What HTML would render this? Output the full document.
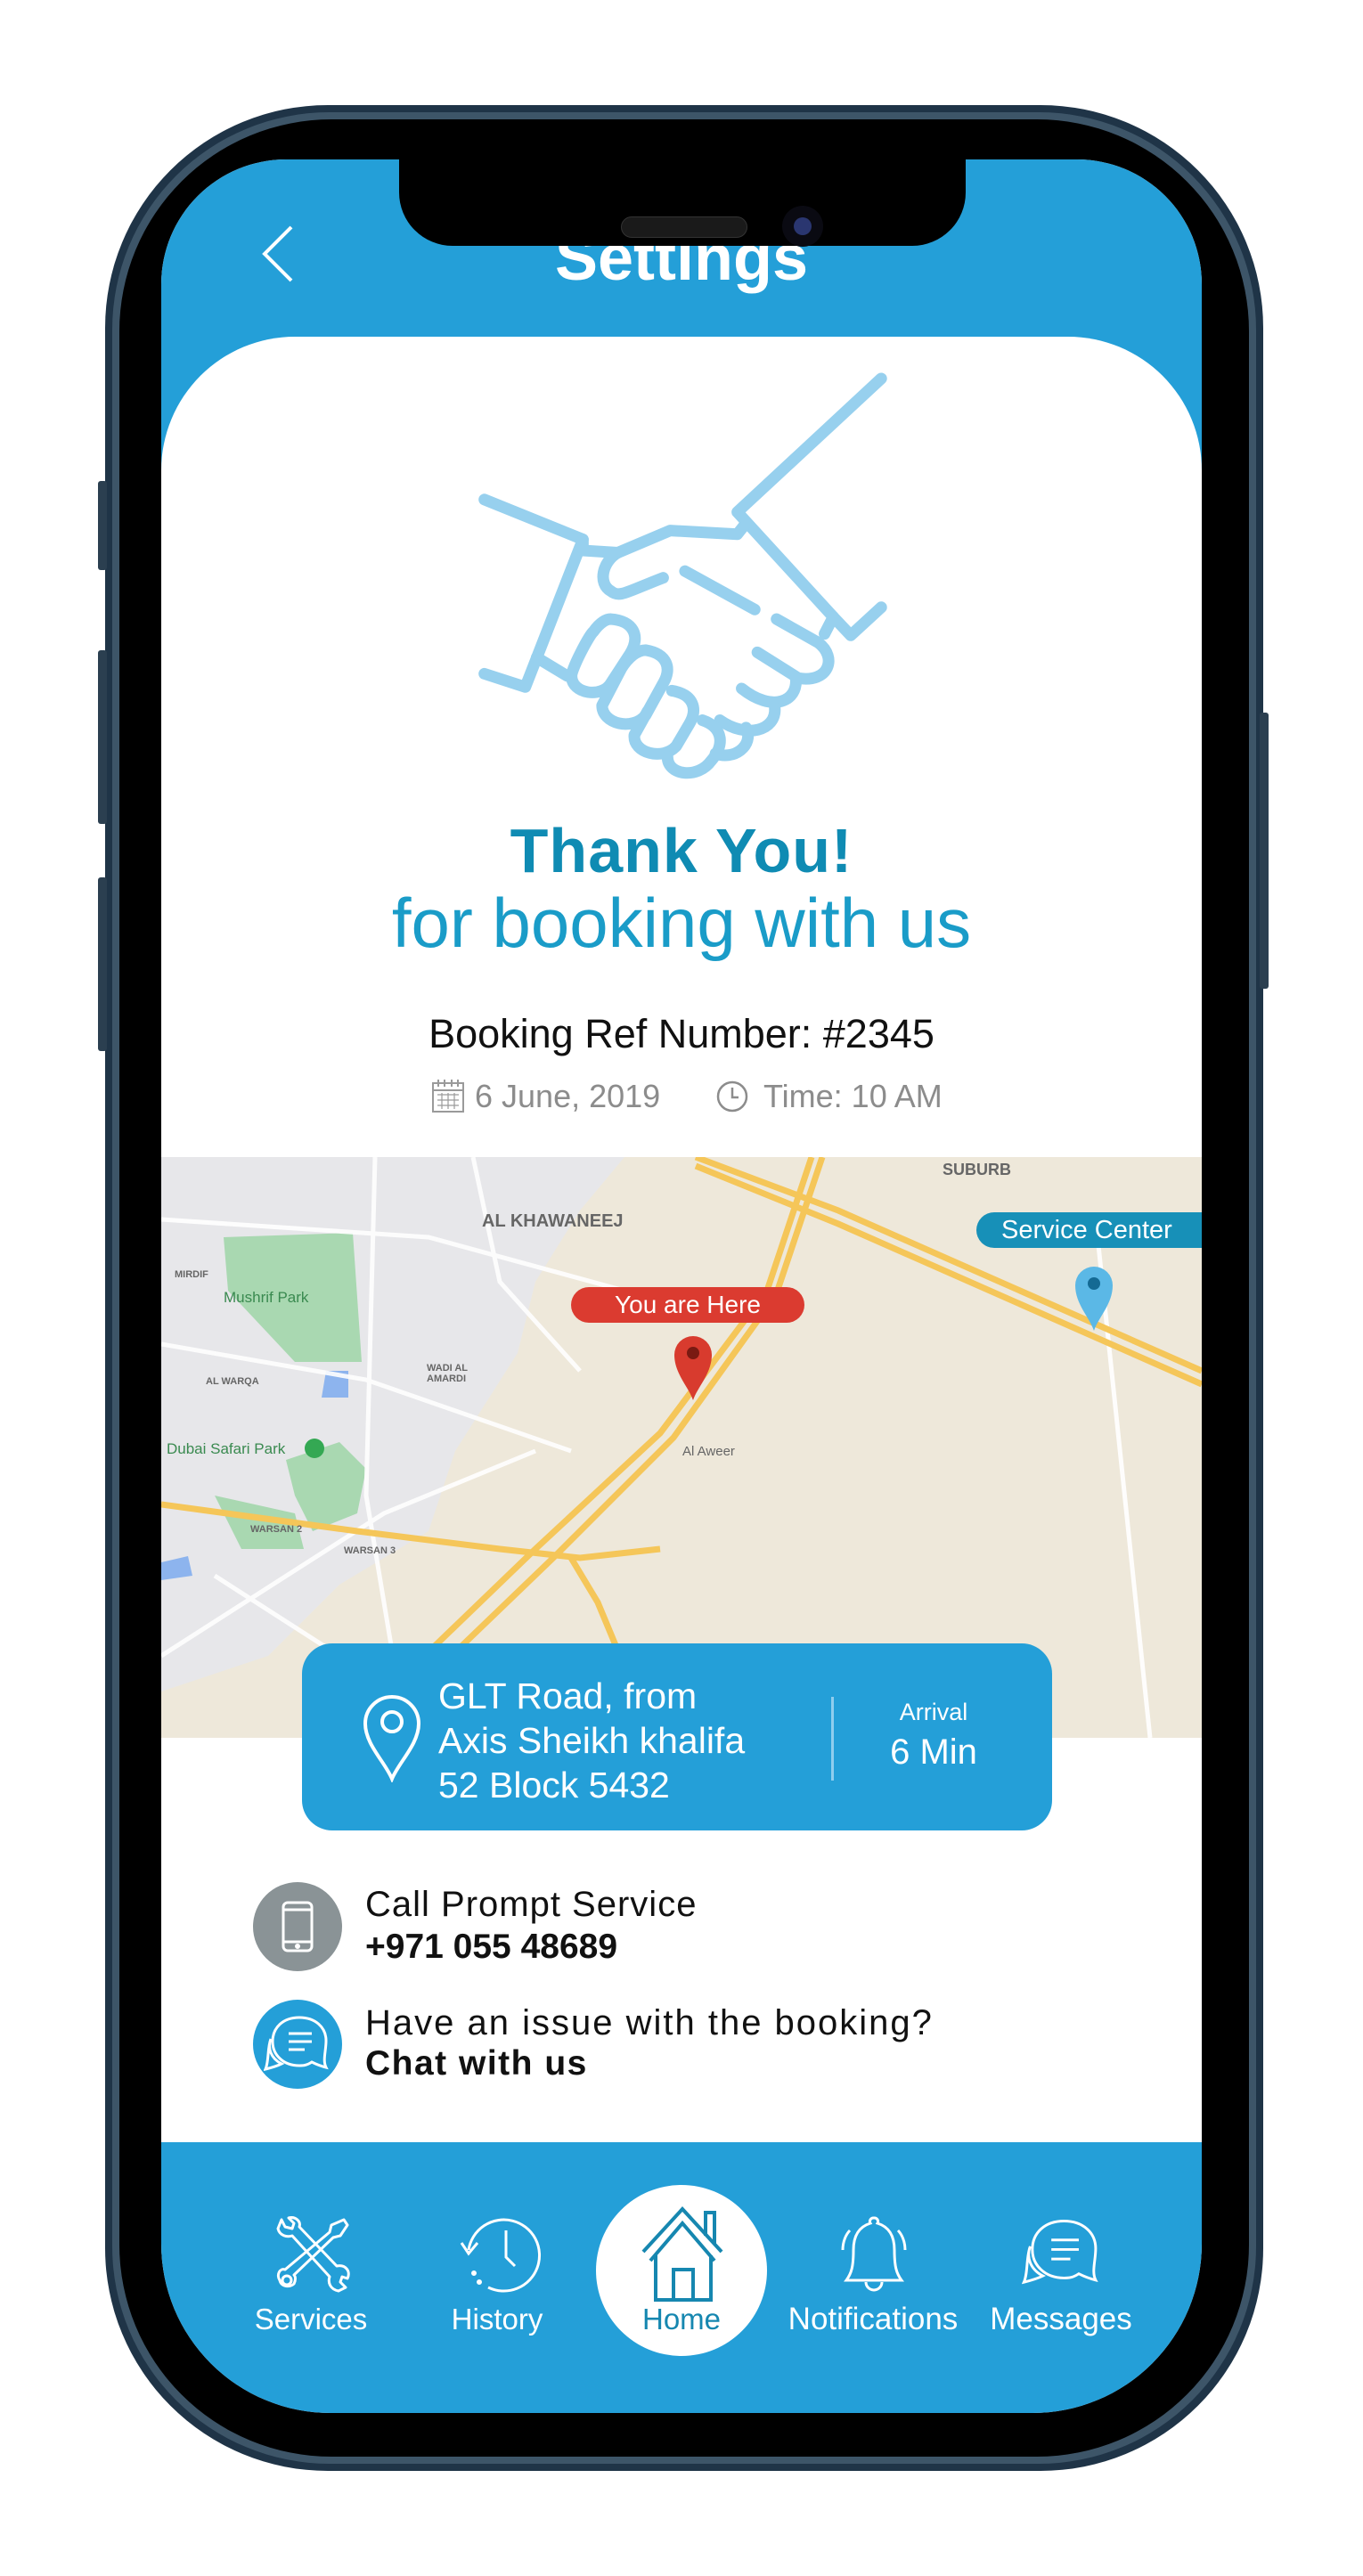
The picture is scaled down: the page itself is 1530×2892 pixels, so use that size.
<!DOCTYPE html>
<html><head><meta charset="utf-8">
<style>
*{margin:0;padding:0;box-sizing:border-box}
html,body{width:1530px;height:2892px;background:#fff;overflow:hidden;font-family:"Liberation Sans",sans-serif}
.abs{position:absolute}
.t{position:absolute;white-space:nowrap}
</style></head><body>
<!-- phone frame -->
<div class="abs" style="left:118px;top:118px;width:1300px;height:2656px;border-radius:250px;background:#1f3447;"></div>
<div class="abs" style="left:126px;top:126px;width:1284px;height:2640px;border-radius:244px;background:#3d5568;"></div>
<div class="abs" style="left:134px;top:134px;width:1268px;height:2624px;border-radius:238px;background:#000;"></div>
<!-- side buttons -->
<div class="abs" style="left:110px;top:540px;width:10px;height:100px;background:#2b3f50;border-radius:3px"></div>
<div class="abs" style="left:110px;top:730px;width:10px;height:195px;background:#2b3f50;border-radius:3px"></div>
<div class="abs" style="left:110px;top:985px;width:10px;height:195px;background:#2b3f50;border-radius:3px"></div>
<div class="abs" style="left:1414px;top:800px;width:10px;height:310px;background:#2b3f50;border-radius:3px"></div>

<!-- screen -->
<div class="abs" style="left:181px;top:179px;width:1168px;height:2530px;border-radius:140px 140px 190px 190px;overflow:hidden;background:#fff">
  <div class="abs" style="left:0;top:0;width:1168px;height:420px;background:#249fd8"></div>
  <div class="abs" style="left:0;top:199px;width:1168px;height:2100px;background:#fff;border-radius:150px 150px 0 0"></div>
  <!-- back -->
  <svg class="abs" style="left:110px;top:74px" width="40" height="64"><path d="M36 2 L6 32 L36 62" fill="none" stroke="#fff" stroke-width="4"/></svg>
  <div class="t" style="left:0;width:1168px;text-align:center;top:70px;font-size:72px;font-weight:bold;color:#fff">Settings</div>

  <!-- handshake (coords in zoom units) -->
  <svg class="abs" style="left:348px;top:236px" width="470" height="464" viewBox="540 500 480 560" preserveAspectRatio="none" fill="none" stroke="#97d0ee" stroke-width="13" stroke-linecap="round" stroke-linejoin="round">
   <g vector-effect="non-scaling-stroke">
    <path vector-effect="non-scaling-stroke" d="M1010 512 L845 693 L955 835 L945 858"/>
    <path vector-effect="non-scaling-stroke" d="M1010 822 L975 860 L955 835"/>
    <path vector-effect="non-scaling-stroke" d="M555 676 L668 730 L602 930 L555 912"/>
    <path vector-effect="non-scaling-stroke" d="M668 730 L668 745 L708 748 L768 718 L845 723 L855 708"/>
    <path vector-effect="non-scaling-stroke" d="M708 748 C690 760 685 790 700 800 C710 810 720 800 760 782"/>
    <path vector-effect="non-scaling-stroke" d="M785 773 L865 825"/>
    <path vector-effect="non-scaling-stroke" d="M890 838 L938 870 C960 890 950 925 915 918 L868 883"/>
    <path vector-effect="non-scaling-stroke" d="M912 918 C915 950 885 965 850 932"/>
    <path vector-effect="non-scaling-stroke" d="M888 958 C890 990 855 1000 825 975"/>
    <path vector-effect="non-scaling-stroke" d="M615 890 L650 915"/>
    <path vector-effect="non-scaling-stroke" d="M700 838 C725 840 735 860 722 885 L700 925 C690 945 655 940 655 915 C655 905 675 860 680 855 C688 842 695 838 700 838Z" />
    <path vector-effect="non-scaling-stroke" d="M740 880 C765 885 770 905 760 925 L740 968 C725 990 690 980 690 955 L712 905 C720 890 730 880 740 880Z"/>
    <path vector-effect="non-scaling-stroke" d="M770 935 C795 940 800 960 790 980 L775 1010 C760 1030 725 1020 727 995 L742 963"/>
    <path vector-effect="non-scaling-stroke" d="M805 975 C830 985 830 1010 815 1030 C800 1055 765 1050 765 1025"/>
    <path vector-effect="non-scaling-stroke" d="M820 1020 C840 1030 865 1010 855 985"/>
   </g>
  </svg>

  <div class="t" style="left:0;width:1168px;text-align:center;top:736px;font-size:70px;font-weight:bold;color:#0f8bb3;letter-spacing:1px">Thank You!</div>
  <div class="t" style="left:0;width:1168px;text-align:center;top:812px;font-size:78px;color:#1a9cc8">for booking with us</div>
  <div class="t" style="left:0;width:1168px;text-align:center;top:956px;font-size:45px;color:#111">Booking Ref Number: #2345</div>
  <!-- date row -->
  <svg class="abs" style="left:303px;top:1031px" width="38" height="40" viewBox="0 0 38 40" fill="none" stroke="#9a9a9a" stroke-width="2"><rect x="2" y="6" width="34" height="32"/><line x1="2" y1="14" x2="36" y2="14"/><path d="M8 2v8M15 2v8M23 2v8M30 2v8"/><path d="M7 19h24M7 25h24M7 31h24M12 17v18M19 17v18M26 17v18" stroke-width="1.2"/></svg>
  <div class="t" style="left:352px;top:1031px;font-size:36px;color:#8c8c8c">6 June, 2019</div>
  <svg class="abs" style="left:622px;top:1033px" width="38" height="38" fill="none" stroke="#8c8c8c" stroke-width="2.5"><circle cx="19" cy="19" r="16"/><path d="M19 9v11h7"/></svg>
  <div class="t" style="left:676px;top:1031px;font-size:36px;color:#8c8c8c">Time: 10 AM</div>

  <!-- map -->
  <svg class="abs" style="left:0;top:1120px" width="1168" height="652" viewBox="0 0 1168 652">
    <rect width="1168" height="652" fill="#eee8da"/>
    <path d="M0 0 H520 L470 60 L420 140 L400 220 L330 330 L300 420 L200 480 L120 560 L0 600Z" fill="#e7e7ea"/>
    <path d="M70 90 L215 85 L225 230 L150 230 L75 150Z" fill="#a9d8b1"/>
    <path d="M185 240 L210 240 L210 270 L180 270Z" fill="#8db4ee"/>
    <path d="M140 340 L200 320 L230 350 L220 400 L170 420 L150 380Z" fill="#a9d8b1"/>
    <path d="M60 380 L150 400 L160 440 L90 440Z" fill="#a9d8b1"/>
    <path d="M0 455 L30 448 L35 470 L0 475Z" fill="#8db4ee"/>
    <g fill="none" stroke="#fff" stroke-width="5" opacity=".9">
      <path d="M0 70 L300 90 L520 150"/><path d="M240 0 L230 380 L260 560"/><path d="M0 210 L230 250 L460 330"/>
      <path d="M0 560 L250 400 L420 330"/><path d="M1050 80 L1110 652"/><path d="M350 0 L380 140 L470 240"/>
      <path d="M60 470 L200 560 L260 652"/>
    </g>
    <g fill="none" stroke="#f5c659" stroke-width="7">
      <path d="M200 652 L420 440 L560 310 L680 150 L730 0"/>
      <path d="M230 652 L440 450 L575 315 L690 155 L742 0"/>
      <path d="M600 0 L760 60 L1168 240"/>
      <path d="M600 10 L760 75 L1168 255"/>
      <path d="M0 390 L220 420 L380 440 L470 450 L560 440"/>
      <path d="M460 450 L490 500 L515 560 L520 652"/>
    </g>
    <g font-family="Liberation Sans" font-size="16" fill="#666" font-weight="bold">
      <text x="360" y="78" font-size="20">AL KHAWANEEJ</text>
      <text x="877" y="20" font-size="18">SUBURB</text>
      <text x="15" y="135" font-size="11">MIRDIF</text>
      <text x="50" y="255" font-size="11">AL WARQA</text>
      <text x="298" y="240" font-size="11">WADI AL</text>
      <text x="298" y="252" font-size="11">AMARDI</text>
      <text x="100" y="421" font-size="11">WARSAN 2</text>
      <text x="205" y="445" font-size="11">WARSAN 3</text>
      <text x="585" y="335" font-size="15" font-weight="normal">Al Aweer</text>
      <text x="70" y="163" font-size="17" font-weight="normal" fill="#3a8a50">Mushrif Park</text>
      <text x="6" y="333" font-size="17" font-weight="normal" fill="#3a8a50">Dubai Safari Park</text>
    </g>
    <circle cx="172" cy="327" r="11" fill="#34a853"/>
  </svg>
  <!-- you are here -->
  <div class="t" style="left:460px;top:1266px;width:262px;height:40px;background:#db3b30;border-radius:20px;color:#fff;font-size:28px;text-align:center;line-height:40px">You are Here</div>
  <svg class="abs" style="left:574px;top:1318px" width="46" height="76" viewBox="0 0 46 76"><path d="M23 75 C18 60 2 45 2 24 A21 21 0 0 1 44 24 C44 45 28 60 23 75Z" fill="#d83b2e"/><circle cx="23" cy="22" r="7" fill="#7a1a12"/></svg>
  <!-- service center -->
  <div class="t" style="left:915px;top:1182px;width:270px;height:40px;background:#1790b8;border-radius:20px 0 0 20px;color:#fff;font-size:29px;line-height:40px;padding-left:28px">Service Center</div>
  <svg class="abs" style="left:1024px;top:1240px" width="46" height="76" viewBox="0 0 46 76"><path d="M23 75 C18 60 2 45 2 24 A21 21 0 0 1 44 24 C44 45 28 60 23 75Z" fill="#5bb8e6"/><circle cx="23" cy="22" r="7" fill="#146a94"/></svg>

  <!-- address card -->
  <div class="abs" style="left:158px;top:1666px;width:842px;height:210px;background:#249fd8;border-radius:34px"></div>
  <svg class="abs" style="left:226px;top:1724px" width="66" height="98" viewBox="0 0 66 98" fill="none" stroke="#fff" stroke-width="4"><path d="M33 94 C25 75 3 55 3 32 A30 30 0 0 1 63 32 C63 55 41 75 33 94Z"/><circle cx="33" cy="30" r="11"/></svg>
  <div class="t" style="left:311px;top:1700px;font-size:41px;color:#fff;line-height:50px">GLT Road, from<br>Axis Sheikh khalifa<br>52 Block 5432</div>
  <div class="abs" style="left:752px;top:1726px;width:3px;height:94px;background:#8fcdee"></div>
  <div class="t" style="left:767px;width:200px;text-align:center;top:1728px;font-size:27px;color:#fff">Arrival</div>
  <div class="t" style="left:767px;width:200px;text-align:center;top:1766px;font-size:40px;color:#fff">6 Min</div>

  <!-- call -->
  <div class="abs" style="left:103px;top:1934px;width:100px;height:100px;border-radius:50%;background:#8a9396"></div>
  <svg class="abs" style="left:135px;top:1955px" width="36" height="58" fill="none" stroke="#fff" stroke-width="3"><rect x="2" y="2" width="32" height="54" rx="5"/><line x1="2" y1="10" x2="34" y2="10"/><line x1="2" y1="46" x2="34" y2="46"/><circle cx="18" cy="51" r="1.5" fill="#fff"/></svg>
  <div class="t" style="left:229px;top:1937px;font-size:40px;color:#111;letter-spacing:1px">Call Prompt Service</div>
  <div class="t" style="left:229px;top:1985px;font-size:39px;color:#111;font-weight:bold">+971 055 48689</div>
  <!-- chat -->
  <div class="abs" style="left:103px;top:2066px;width:100px;height:100px;border-radius:50%;background:#249fd8"></div>
  <svg class="abs" style="left:115px;top:2080px" width="76" height="72" viewBox="0 0 76 72" fill="none" stroke="#fff" stroke-width="3"><path d="M20 58 C8 52 4 40 8 30 C4 40 6 55 2 64 C10 62 16 60 20 58Z"/><path d="M40 6 C58 6 70 17 70 32 C70 44 66 54 70 62 C62 60 58 58 54 56 C48 60 44 60 40 60 C22 60 10 48 10 33 C10 17 22 6 40 6Z"/><path d="M28 24h26M28 33h26M28 42h18"/></svg>
  <div class="t" style="left:229px;top:2070px;font-size:40px;color:#111;letter-spacing:2px">Have an issue with the booking?</div>
  <div class="t" style="left:229px;top:2116px;font-size:39px;color:#111;font-weight:bold;letter-spacing:1.5px">Chat with us</div>

  <!-- bottom nav -->
  <div class="abs" style="left:0;top:2226px;width:1168px;height:304px;background:#249fd8"></div>
  <div class="abs" style="left:488px;top:2274px;width:192px;height:192px;border-radius:50%;background:#fff"></div>
  <!-- services -->
  <svg class="abs" style="left:127px;top:2309px" width="86" height="86" viewBox="0 0 86 86" fill="none" stroke="#fff" stroke-width="3" stroke-linejoin="round"><path d="M8 4 L4 14 C6 22 14 24 20 22 L62 68 C60 74 62 82 72 84 L80 80 L74 74 L76 68 L82 70 C86 62 80 54 70 56 L28 12 C30 6 24 0 16 2 L22 8 L20 14 L12 12Z"/><path d="M78 4 L64 10 L62 18 L12 60 C6 58 2 66 6 72 C8 80 18 80 22 76 C24 72 24 68 22 66 L66 24 L74 22 L82 10Z"/><circle cx="14" cy="72" r="5"/></svg>
  <div class="t" style="left:88px;width:160px;text-align:center;top:2406px;font-size:33px;color:#fff">Services</div>
  <!-- history -->
  <svg class="abs" style="left:333px;top:2307px" width="100" height="92" viewBox="0 0 100 92" fill="none" stroke="#fff" stroke-width="3"><path d="M12 40 A40 40 0 1 1 34 82"/><path d="M4 32 L12 44 L22 32"/><path d="M54 18 V48 L64 58"/><circle cx="18" cy="66" r="1.5" fill="#fff"/><circle cx="24" cy="76" r="1.5" fill="#fff"/></svg>
  <div class="t" style="left:297px;width:160px;text-align:center;top:2406px;font-size:33px;color:#fff">History</div>
  <!-- home -->
  <svg class="abs" style="left:537px;top:2297px" width="96" height="110" viewBox="0 0 96 110" fill="none" stroke="#1687b0" stroke-width="4" stroke-linejoin="miter"><path d="M4 52 L48 4 L92 52"/><path d="M12 62 L48 20 L84 62"/><path d="M74 34 V8 H84 V44"/><path d="M18 56 V106 H80 V56"/><path d="M38 106 V72 H60 V106"/></svg>
  <div class="t" style="left:504px;width:160px;text-align:center;top:2406px;font-size:33px;color:#1687b0">Home</div>
  <!-- notifications -->
  <svg class="abs" style="left:755px;top:2307px" width="90" height="90" viewBox="0 0 90 90" fill="none" stroke="#fff" stroke-width="3"><path d="M45 4 a4 4 0 0 1 4 6 C62 14 68 24 68 40 C68 58 70 66 76 74 H14 C20 66 22 58 22 40 C22 24 28 14 41 10 a4 4 0 0 1 4 -6Z"/><path d="M36 76 a9 9 0 0 0 18 0"/><path d="M10 40 C10 30 14 22 18 18"/><path d="M80 40 C80 30 76 22 72 18"/></svg>
  <div class="t" style="left:689px;width:220px;text-align:center;top:2405px;font-size:35px;color:#fff">Notifications</div>
  <!-- messages -->
  <svg class="abs" style="left:966px;top:2305px" width="90" height="90" viewBox="0 0 76 72" fill="none" stroke="#fff" stroke-width="2.5"><path d="M20 58 C8 52 4 40 8 30 C4 40 6 55 2 64 C10 62 16 60 20 58Z"/><path d="M40 6 C58 6 70 17 70 32 C70 44 66 54 70 62 C62 60 58 58 54 56 C48 60 44 60 40 60 C22 60 10 48 10 33 C10 17 22 6 40 6Z"/><path d="M28 24h26M28 33h26M28 42h18"/></svg>
  <div class="t" style="left:920px;width:180px;text-align:center;top:2405px;font-size:35px;color:#fff">Messages</div>
</div>

<!-- notch -->
<div class="abs" style="left:448px;top:170px;width:636px;height:106px;background:#000;border-radius:0 0 60px 60px"></div>
<div class="abs" style="left:697px;top:243px;width:142px;height:24px;background:#1a1a1a;border-radius:12px;border:1px solid #333"></div>
<div class="abs" style="left:878px;top:231px;width:46px;height:46px;background:#0a0a12;border-radius:50%"></div>
<div class="abs" style="left:891px;top:244px;width:20px;height:20px;background:#2a3670;border-radius:50%"></div>
</body></html>
